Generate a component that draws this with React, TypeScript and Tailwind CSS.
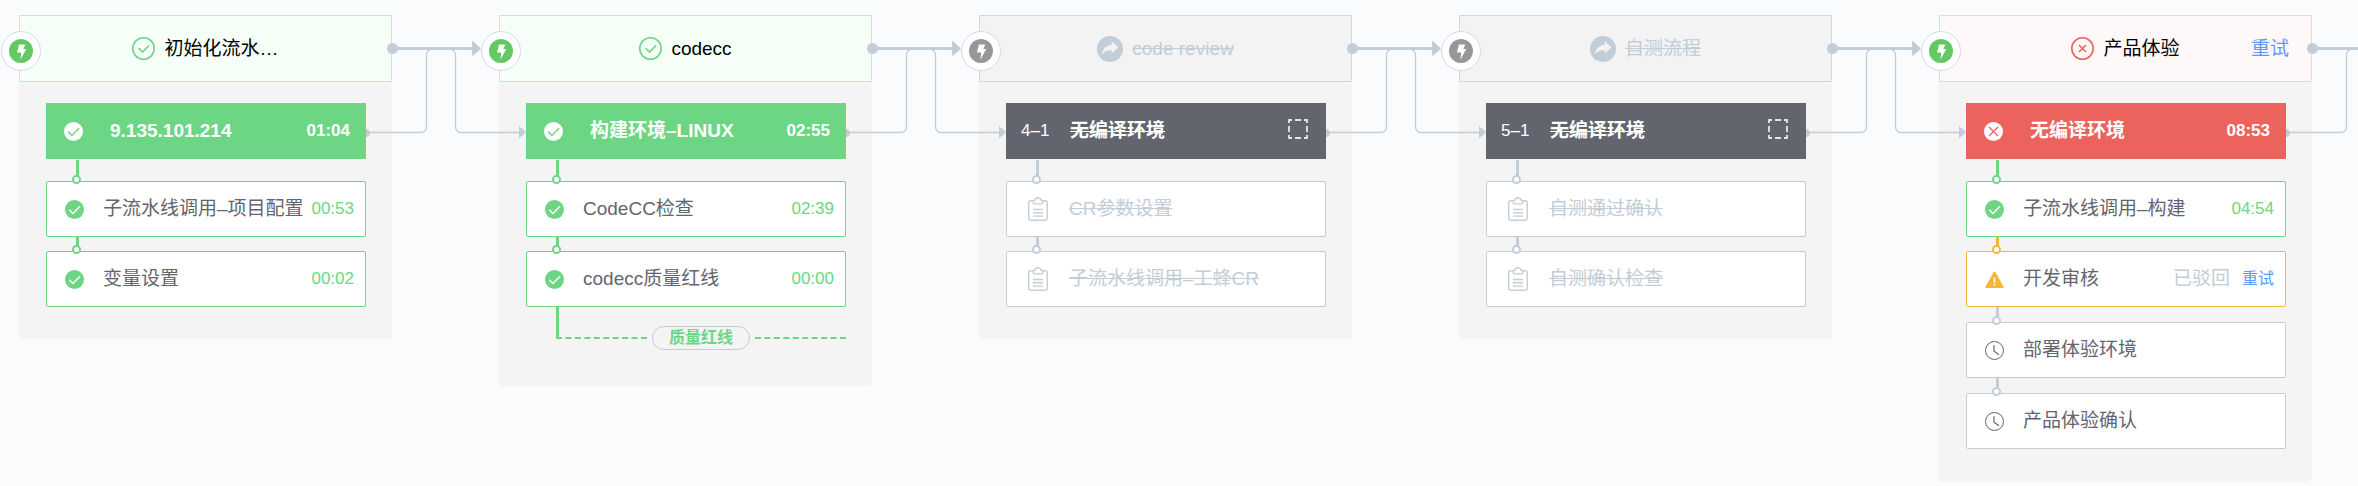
import React from "react";

type Status = "success" | "failed" | "warning" | "skipped" | "waiting";

interface Step {
  name: string;
  status: Status;
  time?: string;
  note?: string;
  retry?: boolean;
}

interface Stage {
  name: string;
  status: Status;
  retry?: boolean;
  job: { name: string; index?: string; time?: string };
  steps: Step[];
  gate?: string;
}

const stages: Stage[] = [
  {
    name: "初始化流水…",
    status: "success",
    job: { name: "9.135.101.214", time: "01:04" },
    steps: [
      { name: "子流水线调用–项目配置", status: "success", time: "00:53" },
      { name: "变量设置", status: "success", time: "00:02" },
    ],
  },
  {
    name: "codecc",
    status: "success",
    job: { name: "构建环境–LINUX", time: "02:55" },
    steps: [
      { name: "CodeCC检查", status: "success", time: "02:39" },
      { name: "codecc质量红线", status: "success", time: "00:00" },
    ],
    gate: "质量红线",
  },
  {
    name: "code review",
    status: "skipped",
    job: { name: "无编译环境", index: "4–1" },
    steps: [
      { name: "CR参数设置", status: "skipped" },
      { name: "子流水线调用–工蜂CR", status: "skipped" },
    ],
  },
  {
    name: "自测流程",
    status: "skipped",
    job: { name: "无编译环境", index: "5–1" },
    steps: [
      { name: "自测通过确认", status: "skipped" },
      { name: "自测确认检查", status: "skipped" },
    ],
  },
  {
    name: "产品体验",
    status: "failed",
    retry: true,
    job: { name: "无编译环境", time: "08:53" },
    steps: [
      { name: "子流水线调用–构建", status: "success", time: "04:54" },
      { name: "开发审核", status: "warning", note: "已驳回", retry: true },
      { name: "部署体验环境", status: "waiting" },
      { name: "产品体验确认", status: "waiting" },
    ],
  },
];

const headerStyle: Record<Status, string> = {
  success: "border-[#c3edc9] bg-[#f5fff8] text-black",
  failed: "border-[#f9d2d0] bg-[#fef9f8] text-black",
  warning: "border-[#f7b73f] bg-white text-black",
  skipped: "border-[#d0d8e4] bg-[#f3f3f3] text-[#c3cdd7]",
  waiting: "border-[#d0d8e4] bg-[#f3f3f3] text-black",
};

const jobStyle: Record<Status, string> = {
  success: "bg-[#6dd685]",
  failed: "bg-[#ec635e]",
  warning: "bg-[#f7b73f]",
  skipped: "bg-[#63656e]",
  waiting: "bg-[#63656e]",
};

const stepBorder: Record<Status, string> = {
  success: "border-[#6dd685]",
  failed: "border-[#ec635e]",
  warning: "border-[#f5b63c]",
  skipped: "border-[#c3cdd7]",
  waiting: "border-[#c3cdd7]",
};

const stepLine: Record<Status, string> = {
  success: "bg-[#6dd685]",
  failed: "bg-[#ec635e]",
  warning: "bg-[#f5b63c]",
  skipped: "bg-[#c3cdd7]",
  waiting: "bg-[#c3cdd7]",
};

function Trigger({ active }: { active: boolean }) {
  return (
    <span className="absolute -left-[19px] top-[15px] z-20 flex size-10 items-center justify-center rounded-full border border-[#d5daec] bg-white">
      <svg className="size-6" viewBox="0 0 24 24" aria-hidden="true">
        <circle cx="12" cy="12" r="12" fill={active ? "#63c963" : "#979797"} />
        <path d="M10 5.600h6.200l-1.800 4.400h2.800L11.400 20.800l.9-7.400H8z" fill="#fff" />
      </svg>
    </span>
  );
}

function StageIcon({ status }: { status: Status }) {
  if (status === "skipped") {
    return (
      <svg className="size-[26px]" viewBox="0 0 26 26" aria-hidden="true">
        <circle cx="13" cy="13" r="13" fill="#c3cdd7" />
        <path d="M14.800 5.200l6.700 6.200-6.700 6.200v-3.400c-4-.1-7 .7-9.800 4 .6-5.200 4-8.900 9.800-9.500z" fill="#f3f3f3" />
      </svg>
    );
  }
  const ok = status === "success";
  return (
    <svg className="size-[23px]" viewBox="0 0 23 23" fill="none" stroke={ok ? "#6dd685" : "#ec635e"} strokeWidth="1.6" aria-hidden="true">
      <circle cx="11.500" cy="11.500" r="10.700" />
      {ok ? <path d="M6.500 11l4 4 6.500-6.500" /> : <path d="M8 8l7 7M15 8l-7 7" />}
    </svg>
  );
}

function JobIcon({ status }: { status: Status }) {
  return (
    <svg className="size-[19px]" viewBox="0 0 19 19" fill="none" aria-hidden="true">
      <circle cx="9.500" cy="9.500" r="9.500" fill="#fff" />
      {status === "success" ? (
        <path d="M4.200 9.800l3.700 3.700 7.200-7.200" stroke="#6dd685" strokeWidth="1.500" />
      ) : (
        <path d="M5 5l9 9M14 5l-9 9" stroke="#ec635e" strokeWidth="1.300" />
      )}
    </svg>
  );
}

function StepIcon({ status }: { status: Status }) {
  switch (status) {
    case "success":
      return (
        <svg className="size-[19px]" viewBox="0 0 19 19" fill="none" aria-hidden="true">
          <circle cx="9.500" cy="9.500" r="9.500" fill="#6dd685" />
          <path d="M4.200 9.800l3.700 3.700 7.200-7.200" stroke="#fff" strokeWidth="1.500" />
        </svg>
      );
    case "warning":
      return (
        <svg className="size-[19px]" viewBox="0 0 19 19" aria-hidden="true">
          <path d="M9.500 1.500c.3 0 .6.200.8.500l8.300 14.800c.3.600 0 1.200-.7 1.200H1.100c-.7 0-1-.6-.7-1.200L8.700 2c.2-.3.500-.5.800-.5z" fill="#f5b63c" />
          <path d="M8.700 7.500h1.600v5H8.700zM8.700 13.800h1.600v1.600H8.700z" fill="#fff" />
        </svg>
      );
    case "skipped":
      return (
        <svg className="h-6 w-5" viewBox="0 0 20 24" fill="none" stroke="#c6ced8" strokeWidth="1.400" aria-hidden="true">
          <path d="M5.300 3.700H2.700a2 2 0 0 0-2 2v15.600a2 2 0 0 0 2 2h14.600a2 2 0 0 0 2-2V5.700a2 2 0 0 0-2-2h-2.600" />
          <path d="M6.500 6.900h7a1.300 1.300 0 0 0 1.300-1.300V4.500a1.300 1.300 0 0 0-1.300-1.300h-.4C12.700 1.600 11.600.7 10 .7S7.300 1.600 6.900 3.200h-.4a1.300 1.300 0 0 0-1.300 1.300v1.100a1.300 1.300 0 0 0 1.300 1.300z" />
          <path d="M5 12.500h10M5 15.800h10M5 19.100h10" />
        </svg>
      );
    default:
      return (
        <svg className="size-[19px]" viewBox="0 0 19 19" fill="none" stroke="#63656e" aria-hidden="true">
          <circle cx="9.500" cy="9.500" r="9" />
          <path d="M9 4.200v6l5 3.600" strokeWidth="1.200" />
        </svg>
      );
  }
}

function DashedBox() {
  return (
    <svg className="mb-1 size-5" viewBox="0 0 20 20" fill="none" stroke="#e6e6e8" strokeWidth="1.800" aria-hidden="true">
      <path d="M4 1H1v3M16 1h3v3M4 19H1v-3M16 19h3v-3M7 1h6M7 19h6M1 7v6M19 7v6" />
    </svg>
  );
}

function Connector() {
  return (
    <svg className="relative z-10 h-[130px] w-[107px] shrink-0 overflow-visible" viewBox="0 0 107 130" fill="none" stroke="#c3cdd7" aria-hidden="true">
      <path d="M0 33.500h82" strokeWidth="3" />
      <g fill="#c3cdd7" stroke="none">
        <circle cx="0.500" cy="33.500" r="5.500" />
        <path d="M80 26.500l1.200-.3L89 33.500l-7.800 7.200-1.200-.4z" />
        <path d="M-26 114c2.400 0 4 1.700 4 4s-1.600 4-4 4z" />
        <path d="M127 111l7 6.300-7 6.200z" />
      </g>
      <path d="M-23 117.500h51.500c4 0 6-2 6-6V41c0-4 1-6 4-6" strokeWidth="1.300" />
      <path d="M59.500 35c3 0 4 2 4 6v70.500c0 4 2 6 6 6H128" strokeWidth="1.300" />
    </svg>
  );
}

function StepRow({ step }: { step: Step }) {
  const skipped = step.status === "skipped";
  return (
    <li>
      <div className={step.status === "waiting" ? "relative h-[15px]" : "relative h-[14px]"}>
        <span className={`absolute bottom-0 left-[30px] top-0 w-[3px] ${stepLine[step.status]}`} />
        <span className={`absolute -bottom-[3px] left-[26px] z-10 size-[9px] rounded-full border-2 bg-white ${stepBorder[step.status]}`} />
      </div>
      <div className={`flex h-14 items-center rounded-[2px] border bg-white pr-[11px] ${stepBorder[step.status]}`}>
        <span className={skipped ? "flex w-[62px] pl-[21px]" : "flex w-14 pl-[18px]"}>
          <StepIcon status={step.status} />
        </span>
        <span className={skipped ? "flex-1 whitespace-nowrap text-[#c3cdd7] line-through" : "flex-1 whitespace-nowrap text-[#63656e]"}>
          {step.name}
        </span>
        {step.time && <span className="text-[17px] text-[#6dd685]">{step.time}</span>}
        {step.note && <span className="text-[#c3cdd7]">{step.note}</span>}
        {step.retry && (
          <button type="button" className="ml-3 text-base text-[#5a9bf8]">
            重试
          </button>
        )}
      </div>
    </li>
  );
}

function StageColumn({ stage }: { stage: Stage }) {
  const skipped = stage.status === "skipped";
  return (
    <section className="w-[373px] shrink-0 rounded-b bg-[#f4f4f4]">
      <header className={`relative flex h-[67px] items-center justify-center gap-[9px] border ${headerStyle[stage.status]}`}>
        <Trigger active={!skipped} />
        <StageIcon status={stage.status} />
        <h2 className={skipped ? "line-through" : ""}>{stage.name}</h2>
        {stage.retry && (
          <button type="button" className="absolute right-[22px] text-[#5a9bf8]">
            重试
          </button>
        )}
      </header>
      <div className="pb-8 pl-[27px] pr-[26px] pt-[21px]">
        <div className={`flex h-14 items-center text-white ${jobStyle[stage.status]}`}>
          <span className={stage.job.index ? "flex w-16 pl-[15px] text-[17px]" : "flex w-16 pl-[18px]"}>
            {stage.job.index ?? <JobIcon status={stage.status} />}
          </span>
          <h3 className={skipped ? "flex-1 font-bold line-through decoration-1" : "flex-1 font-bold"}>{stage.job.name}</h3>
          {stage.job.time ? (
            <span className="pr-4 text-[17px] font-bold">{stage.job.time}</span>
          ) : (
            <span className="pr-[18px]">
              <DashedBox />
            </span>
          )}
        </div>
        <div className="flex h-2 pl-[30px] pt-px">
          <span className={`w-[3px] ${stepLine[stage.steps[0].status]}`} />
        </div>
        <ol>
          {stage.steps.map((step) => (
            <StepRow key={step.name} step={step} />
          ))}
        </ol>
        {stage.gate && (
          <div className="flex h-[47px] pl-[30px]">
            <span className="h-[30px] w-[3px] shrink-0 bg-[#6dd685]" />
            <div className="-ml-[3px] mb-1 mt-[19px] flex h-6 flex-1 items-center gap-[5px]">
              <span className="flex-1 border-t-2 border-dashed border-[#6dd685]" />
              <span className="flex h-6 items-center rounded-full border border-[#c3cdd7] px-4 text-base font-bold text-[#6dd685]">
                {stage.gate}
              </span>
              <span className="flex-1 border-t-2 border-dashed border-[#6dd685]" />
            </div>
          </div>
        )}
      </div>
    </section>
  );
}

export default function App() {
  return (
    <main className="flex min-h-screen items-start overflow-hidden bg-[#fafbfd] pb-1 pl-[19px] pt-[15px] font-['Liberation_Sans','Noto_Sans_CJK_SC',sans-serif] text-[19px] leading-7">
      {stages.map((stage) => (
        <React.Fragment key={stage.name}>
          <StageColumn stage={stage} />
          <Connector />
        </React.Fragment>
      ))}
    </main>
  );
}
